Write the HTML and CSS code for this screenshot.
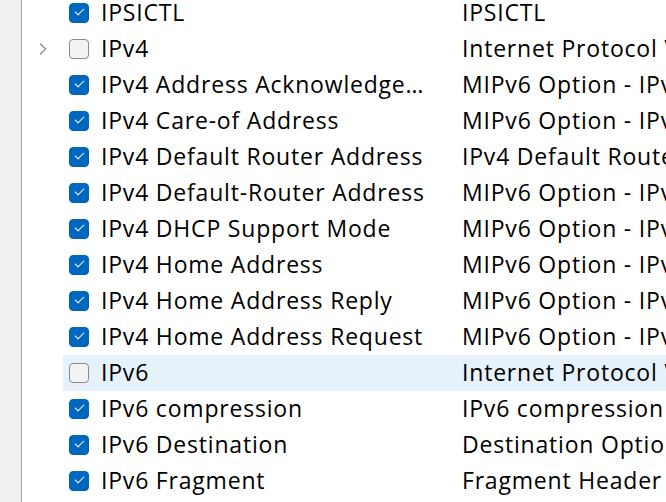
FILE: index.html
```html
<!DOCTYPE html>
<html>
<head>
<meta charset="utf-8">
<link rel="stylesheet" href="styles.css">
</head>
<body>
<div class="app">
  <aside class="side"></aside>
  <main class="list">
    <div class="row"><span class="exp"></span><div class="cell"><span class="cb on"></span><span class="name">IPSICTL</span><span class="desc">IPSICTL</span></div></div>
    <div class="row"><span class="exp"><svg width="10" height="14" viewBox="0 0 10 14"><path d="M2 1.5 L7.5 7 L2 12.5" fill="none" stroke="#8a8a8a" stroke-width="1.2"/></svg></span><div class="cell"><span class="cb"></span><span class="name">IPv4</span><span class="desc">Internet Protocol Version 4</span></div></div>
    <div class="row"><span class="exp"></span><div class="cell"><span class="cb on"></span><span class="name">IPv4 Address Acknowledgement</span><span class="desc">MIPv6 Option - IPv4 Address Acknowledgement</span></div></div>
    <div class="row"><span class="exp"></span><div class="cell"><span class="cb on"></span><span class="name">IPv4 Care-of Address</span><span class="desc">MIPv6 Option - IPv4 Care-of Address</span></div></div>
    <div class="row"><span class="exp"></span><div class="cell"><span class="cb on"></span><span class="name">IPv4 Default Router Address</span><span class="desc">IPv4 Default Router Address</span></div></div>
    <div class="row"><span class="exp"></span><div class="cell"><span class="cb on"></span><span class="name">IPv4 Default-Router Address</span><span class="desc">MIPv6 Option - IPv4 Default-Router Address</span></div></div>
    <div class="row"><span class="exp"></span><div class="cell"><span class="cb on"></span><span class="name">IPv4 DHCP Support Mode</span><span class="desc">MIPv6 Option - IPv4 DHCP Support Mode</span></div></div>
    <div class="row"><span class="exp"></span><div class="cell"><span class="cb on"></span><span class="name">IPv4 Home Address</span><span class="desc">MIPv6 Option - IPv4 Home Address</span></div></div>
    <div class="row"><span class="exp"></span><div class="cell"><span class="cb on"></span><span class="name">IPv4 Home Address Reply</span><span class="desc">MIPv6 Option - IPv4 Home Address Reply</span></div></div>
    <div class="row"><span class="exp"></span><div class="cell"><span class="cb on"></span><span class="name">IPv4 Home Address Request</span><span class="desc">MIPv6 Option - IPv4 Home Address Request</span></div></div>
    <div class="row"><span class="exp"></span><div class="cell hover"><span class="cb"></span><span class="name">IPv6</span><span class="desc">Internet Protocol Version 6</span></div></div>
    <div class="row"><span class="exp"></span><div class="cell"><span class="cb on"></span><span class="name">IPv6 compression</span><span class="desc">IPv6 compression</span></div></div>
    <div class="row"><span class="exp"></span><div class="cell"><span class="cb on"></span><span class="name">IPv6 Destination</span><span class="desc">Destination Options</span></div></div>
    <div class="row"><span class="exp"></span><div class="cell"><span class="cb on"></span><span class="name">IPv6 Fragment</span><span class="desc">Fragment Header</span></div></div>
  </main>
</div>
</body>
</html>
```
FILE: styles.css
```css
html, body {
  margin: 0;
  padding: 0;
  background: #ffffff;
  overflow: hidden;
}
.app {
  display: flex;
  width: 666px;
  height: 502px;
  overflow: hidden;
  font-family: "Open Sans", "Noto Sans", sans-serif;
  font-size: 23px;
  letter-spacing: 0.8px;
  color: #000;
}
.side {
  flex: 0 0 21px;
  background: #f0f0f0;
  border-right: 1px solid #a8a8a8;
}
.list {
  flex: 1;
  margin-top: -5px;
  overflow: hidden;
}
.row {
  display: flex;
  height: 36px;
}
.exp {
  flex: 0 0 41px;
  display: flex;
  align-items: center;
  justify-content: flex-end;
  padding-right: 15px;
  box-sizing: border-box;
}
.cell {
  flex: 1;
  display: flex;
  align-items: center;
  padding-left: 6px;
  white-space: nowrap;
  min-width: 0;
}
.cell.hover {
  background: #e5f1fb;
}
.cb {
  flex: 0 0 auto;
  width: 20px;
  height: 20px;
  box-sizing: border-box;
  border: 1px solid #8a8a8a;
  border-radius: 4px;
  background: #f3f3f3;
  margin-right: 12px;
  position: relative;
}
.cb.on {
  background: #0067c0;
  border-color: #0067c0;
}
.cb.on::after {
  content: "";
  position: absolute;
  left: 5px;
  top: 4px;
  width: 8px;
  height: 4px;
  border-left: 1.3px solid #fff;
  border-bottom: 1.3px solid #fff;
  transform: rotate(-45deg);
}
.name,
.desc {
  padding-bottom: 2px;
}
.name {
  flex: 0 0 333px;
  width: 333px;
  overflow: hidden;
  text-overflow: ellipsis;
  margin-right: 28px;
}
.desc {
  flex: 0 0 auto;
}
```
